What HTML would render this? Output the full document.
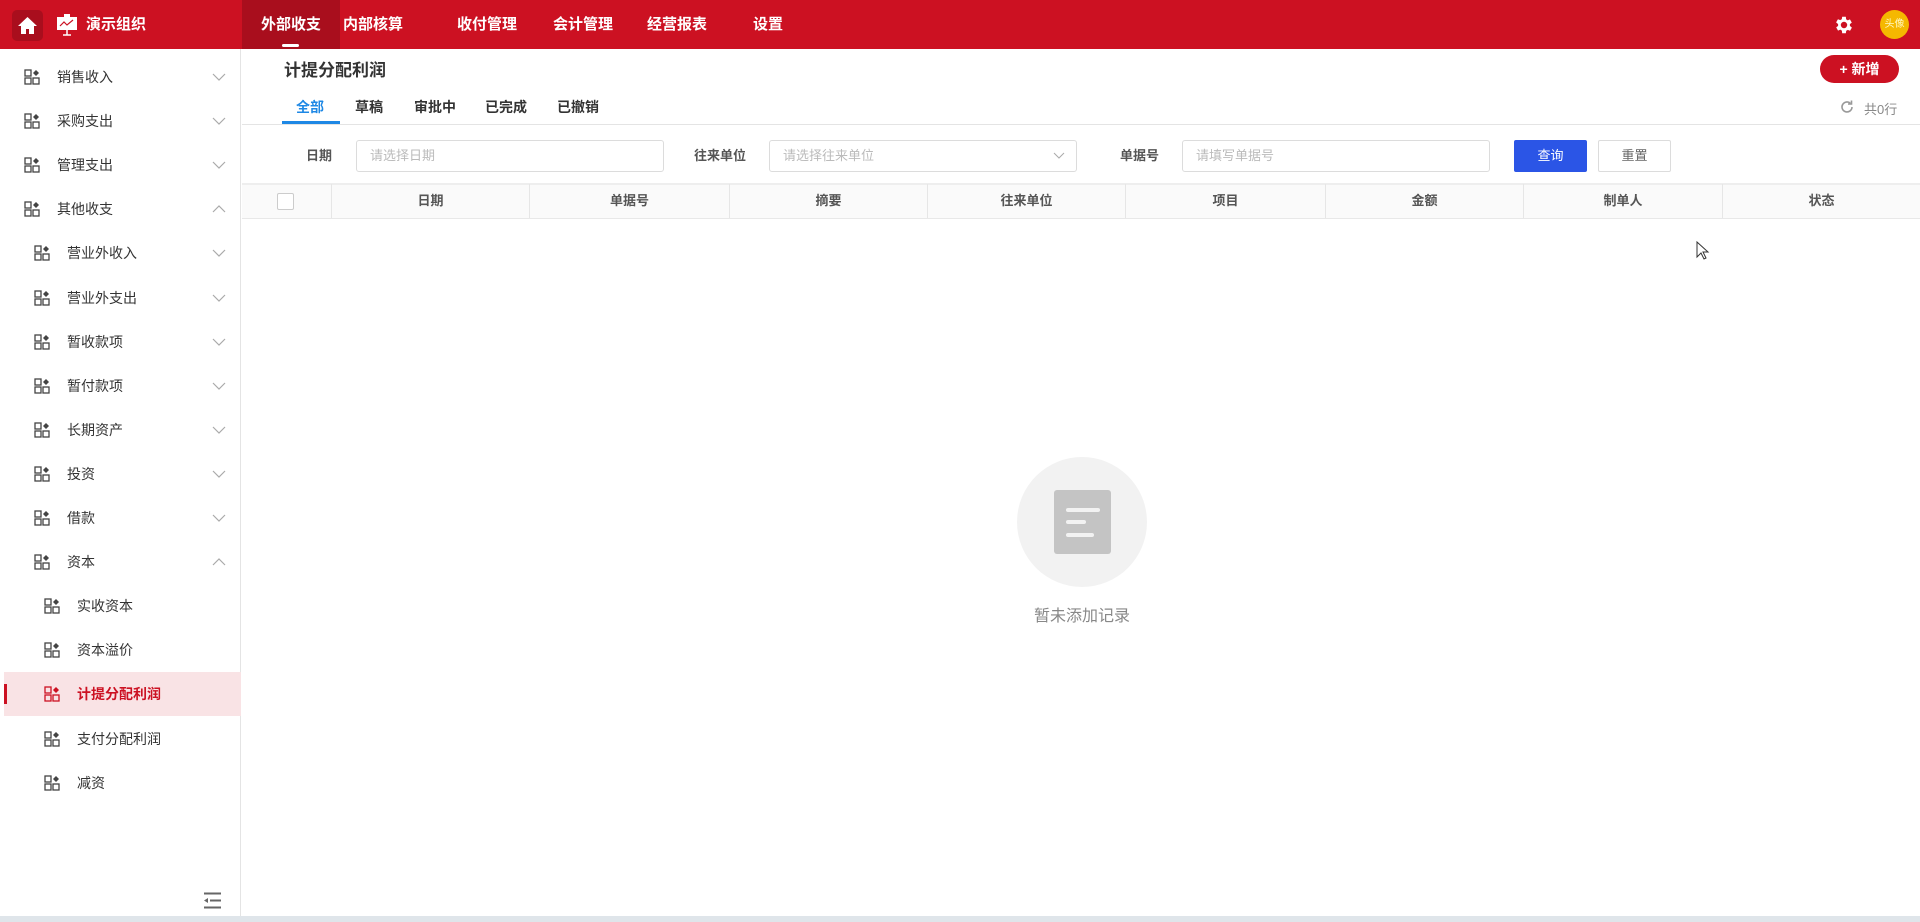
<!DOCTYPE html>
<html><head><meta charset="utf-8"><style>
*{margin:0;padding:0;box-sizing:border-box}
body{width:1920px;height:922px;overflow:hidden;background:#fff;font-family:"Liberation Sans","Noto Sans CJK SC",sans-serif;position:relative;color:#333}
.a{position:absolute}
.hdr{left:0;top:0;width:1920px;height:49px;background:#cc1122}
.nav{top:0;height:49px;line-height:49px;color:#fff;font-size:15px;font-weight:bold;text-align:center;width:98px}
.side{left:0;top:49px;width:241px;height:867px;border-right:1px solid #e4e4e4;background:#fff}
.it{left:0;width:240px;height:44px;font-size:14px;color:#333;line-height:44px}
.it .ic{position:absolute;top:14px}
.it .tx{position:absolute;top:0}
.it .ch{position:absolute;left:212px;top:16px}
.inp{height:32px;border:1px solid #dcdcdc;border-radius:3px;font-size:13px;color:#bbb;line-height:30px;padding-left:13px}
.lbl{font-size:13px;color:#555;font-weight:bold;line-height:32px;top:140px}
.th{top:184px;height:34px;line-height:34px;font-size:13px;font-weight:bold;color:#555;text-align:center;border-left:1px solid #e6e6e6}
</style></head><body>
<div class="a hdr"></div>
<div class="a" style="left:12px;top:10px;width:31px;height:31px;background:#a90e1d;border-radius:5px"></div>
<svg class="a" style="left:17px;top:15px" width="21" height="21" viewBox="0 0 21 21"><path d="M10.5 2 L1 11 H4 V19 H9 V14 H12 V19 H17 V11 H20 Z" fill="#fff"/></svg>
<svg class="a" style="left:55px;top:13px" width="24" height="24" viewBox="0 0 24 24"><rect x="9" y="1" width="6" height="3" fill="#fff"/><rect x="2" y="4" width="20" height="13" fill="#fff"/><path d="M5 13 L9 9 L12 12 L18 7" stroke="#cc1122" stroke-width="1.2" fill="none"/><path d="M12 17 V22 M8 22 H16" stroke="#fff" stroke-width="1.5"/></svg>
<div class="a" style="left:86px;top:0;line-height:49px;color:#fff;font-size:15px;font-weight:bold">演示组织</div>
<div class="a" style="left:242px;top:0;width:98px;height:49px;background:#a90e1d"></div>
<div class="a nav" style="left:242px">外部收支</div>
<div class="a" style="left:282px;top:44px;width:17px;height:3px;background:#fff;border-radius:2px"></div>
<div class="a nav" style="left:324px">内部核算</div>
<div class="a nav" style="left:438px">收付管理</div>
<div class="a nav" style="left:534px">会计管理</div>
<div class="a nav" style="left:628px">经营报表</div>
<div class="a nav" style="left:719px">设置</div>
<svg class="a" style="left:1833px;top:14px" width="22" height="22" viewBox="0 0 24 24"><path fill="#fff" d="M19.4 13a7.5 7.5 0 0 0 0-2l2.1-1.6-2-3.5-2.5 1a7.3 7.3 0 0 0-1.7-1L15 3h-4l-.4 2.7a7.3 7.3 0 0 0-1.7 1l-2.5-1-2 3.5L6.6 11a7.5 7.5 0 0 0 0 2l-2.1 1.6 2 3.5 2.5-1a7.3 7.3 0 0 0 1.7 1L11 21h4l.4-2.7a7.3 7.3 0 0 0 1.7-1l2.5 1 2-3.5zM13 15.5a3.5 3.5 0 1 1 0-7 3.5 3.5 0 0 1 0 7z" transform="translate(-1 0)"/></svg>
<div class="a" style="left:1880px;top:10px;width:29px;height:29px;border-radius:50%;background:#f5b800;color:#fff7c0;font-size:10px;line-height:29px;text-align:center">头像</div>

<div class="a side"></div>
<div class="a" style="left:4px;top:672px;width:237px;height:44px;background:#f9e3e5"></div>
<div class="a" style="left:4px;top:684px;width:3px;height:20px;background:#cc1122"></div>
<div id="sb"></div>
<svg class="a" style="left:203px;top:892px" width="19" height="17" viewBox="0 0 19 17"><path d="M1 1.5H18M7 8.5H18M1 15.5H18" stroke="#666" stroke-width="2"/><path d="M1 8.5 L5 6 V11Z" fill="#666"/></svg>
<div class="a" style="left:0;top:916px;width:1920px;height:6px;background:#dfe5ea"></div>

<div class="a" style="left:284px;top:56px;font-size:17px;font-weight:bold;color:#333">计提分配利润</div>
<div class="a" style="left:1820px;top:55px;width:79px;height:28px;background:#cc1122;border-radius:14px;color:#fff;font-size:14px;font-weight:bold;line-height:28px;text-align:center">+ 新增</div>
<div class="a" style="left:296px;top:97px;font-size:14px;font-weight:bold;color:#1e88e5">全部</div>
<div class="a" style="left:355px;top:97px;font-size:14px;font-weight:bold;color:#333">草稿</div>
<div class="a" style="left:414px;top:97px;font-size:14px;font-weight:bold;color:#333">审批中</div>
<div class="a" style="left:485px;top:97px;font-size:14px;font-weight:bold;color:#333">已完成</div>
<div class="a" style="left:557px;top:97px;font-size:14px;font-weight:bold;color:#333">已撤销</div>
<div class="a" style="left:242px;top:124px;width:1678px;height:1px;background:#e4e4e4"></div>
<div class="a" style="left:282px;top:121px;width:58px;height:3px;background:#1e88e5"></div>
<svg class="a" style="left:1839px;top:99px" width="16" height="16" viewBox="0 0 16 16"><path d="M13 8a5 5 0 1 1-1.6-3.7" stroke="#999" stroke-width="1.6" fill="none"/><path d="M12.5 1.5V5H9" stroke="#999" stroke-width="1.6" fill="none"/></svg>
<div class="a" style="left:1864px;top:99px;font-size:13px;color:#888">共0行</div>

<div class="a lbl" style="left:306px">日期</div>
<div class="a inp" style="left:356px;top:140px;width:308px">请选择日期</div>
<div class="a lbl" style="left:694px">往来单位</div>
<div class="a inp" style="left:769px;top:140px;width:308px">请选择往来单位</div>
<svg class="a" style="left:1053px;top:150px" width="12" height="10" viewBox="0 0 12 10"><path d="M1 3 L6 8 L11 3" stroke="#aaa" fill="none"/></svg>
<div class="a lbl" style="left:1120px">单据号</div>
<div class="a inp" style="left:1182px;top:140px;width:308px">请填写单据号</div>
<div class="a" style="left:1514px;top:140px;width:73px;height:32px;background:#2b55e6;border-radius:2px;color:#fff;font-size:13px;line-height:32px;text-align:center">查询</div>
<div class="a" style="left:1598px;top:140px;width:73px;height:32px;border:1px solid #dcdcdc;border-radius:2px;color:#666;font-size:13px;line-height:30px;text-align:center">重置</div>

<div class="a" style="left:242px;top:183px;width:1678px;height:36px;background:#fafafa;border-top:2px solid #eee;border-bottom:1px solid #e8e8e8"></div>
<div class="a" style="left:277px;top:193px;width:17px;height:17px;border:1px solid #ccc;border-radius:2px;background:#fff"></div>
<div class="a th" style="left:331px;width:198px">日期</div>
<div class="a th" style="left:529px;width:200px">单据号</div>
<div class="a th" style="left:729px;width:198px">摘要</div>
<div class="a th" style="left:927px;width:198px">往来单位</div>
<div class="a th" style="left:1125px;width:200px">项目</div>
<div class="a th" style="left:1325px;width:198px">金额</div>
<div class="a th" style="left:1523px;width:199px">制单人</div>
<div class="a th" style="left:1722px;width:198px">状态</div>

<div class="a" style="left:1017px;top:457px;width:130px;height:130px;border-radius:50%;background:#f2f2f2"></div>
<div class="a" style="left:1054px;top:490px;width:57px;height:64px;background:#c4c4c4;border-radius:3px"></div>
<div class="a" style="left:1066px;top:508px;width:34px;height:4px;background:#f2f2f2;border-radius:2px"></div>
<div class="a" style="left:1066px;top:520px;width:20px;height:4px;background:#f2f2f2;border-radius:2px"></div>
<div class="a" style="left:1066px;top:533px;width:28px;height:4px;background:#f2f2f2;border-radius:2px"></div>
<div class="a" style="left:1032px;top:602px;width:100px;text-align:center;font-size:16px;color:#888">暂未添加记录</div>
<svg class="a" style="left:1696px;top:241px" width="14" height="20" viewBox="0 0 14 20"><path d="M1 1 V16 L5 12 L8 18 L10 17 L7 11 H12 Z" fill="#fff" stroke="#333"/></svg>

<script>
var items=[["销售收入",0,"d"],["采购支出",0,"d"],["管理支出",0,"d"],["其他收支",0,"u"],["营业外收入",1,"d"],["营业外支出",1,"d"],["暂收款项",1,"d"],["暂付款项",1,"d"],["长期资产",1,"d"],["投资",1,"d"],["借款",1,"d"],["资本",1,"u"],["实收资本",2,""],["资本溢价",2,""],["计提分配利润",2,"",1],["支付分配利润",2,""],["减资",2,""]];
var ix=[24,34,44],tx=[57,67,77],h="";
items.forEach(function(t,i){var y=55+i*44.1,c=t[3]?"#cc1122":"#333",cs=t[3]?"#cc1122":"#444";
h+='<div class="a it" style="top:'+y+'px"><svg class="ic" style="left:'+ix[t[1]]+'px" width="17" height="16" viewBox="0 0 17 16"><rect x="1" y="1" width="6" height="6" fill="none" stroke="'+cs+'" stroke-width="1.3"/><rect x="1" y="9" width="6" height="6" fill="none" stroke="'+cs+'" stroke-width="1.3"/><rect x="9" y="9" width="6" height="6" fill="none" stroke="'+cs+'" stroke-width="1.3"/><path d="M12 1 L15 4 L12 7 L9 4Z" fill="'+cs+'"/></svg><span class="tx" style="left:'+tx[t[1]]+'px;color:'+c+(t[3]?';font-weight:bold':'')+'">'+t[0]+'</span>';
if(t[2])h+='<svg class="ch" width="14" height="12" viewBox="0 0 14 12"><path d="'+(t[2]=="d"?"M1 3 L7 9 L13 3":"M1 9 L7 3 L13 9")+'" stroke="#aaa" stroke-width="1.2" fill="none"/></svg>';
h+='</div>';});
document.getElementById("sb").innerHTML=h;
</script>
</body></html>
